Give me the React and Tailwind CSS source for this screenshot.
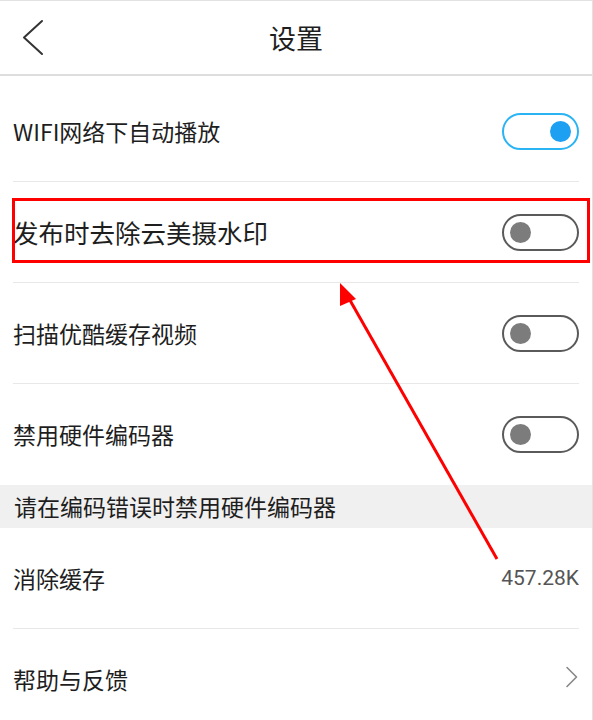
const font = { fontFamily: '"Noto Sans CJK SC", "Noto Sans", sans-serif' };

function Toggle({ on }) {
  return (
    <div
      className={`flex h-[37px] w-[77px] items-center rounded-full border-2 px-[6px] ${
        on ? "justify-end border-[#2ab4f4]" : "justify-start border-[#5a5a5a]"
      }`}
    >
      <div className={`h-[21px] w-[21px] rounded-full ${on ? "bg-[#1ea0f2]" : "bg-[#7c7c7c]"}`} />
    </div>
  );
}

function Row({ label, children, divider = true, big = false }) {
  return (
    <div
      className={`mx-[13px] flex h-[101px] shrink-0 items-center justify-between border-b ${
        divider ? "border-[#e8e8e8]" : "border-transparent"
      }`}
    >
      <span className={`${big ? "text-[25.5px]" : "text-[23px]"} leading-none text-[#1e1e1e]`}>{label}</span>
      {children}
    </div>
  );
}

export default function App() {
  return (
    <div className="relative h-[720px] w-[593px] overflow-hidden border-t border-r border-[#e2e2e2] bg-white" style={font}>
      {/* Header */}
      <div className="relative flex h-[75px] items-center justify-center border-b-2 border-[#dedede]">
        <svg className="absolute left-[20px] top-[17px]" width="26" height="40" viewBox="0 0 26 40">
          <polyline points="22,3 4,19.5 22,36" fill="none" stroke="#333" strokeWidth="2" strokeLinecap="round" strokeLinejoin="round" />
        </svg>
        <span className="text-[27px] leading-none text-[#1e1e1e]">设置</span>
      </div>

      <div className="flex flex-col pt-[5px]">
        <Row label="WIFI网络下自动播放">
          <Toggle on />
        </Row>

        <div className="relative">
          <Row label="发布时去除云美摄水印" big>
            <Toggle />
          </Row>
          <div className="pointer-events-none absolute left-[12px] right-[2px] top-[16px] h-[65px] border-[3px] border-[#ff0000]" />
        </div>

        <Row label="扫描优酷缓存视频">
          <Toggle />
        </Row>

        <Row label="禁用硬件编码器" divider={false}>
          <Toggle />
        </Row>

        {/* Section hint */}
        <div className="flex h-[43px] items-center bg-[#f0f0f0] px-[14px]">
          <span className="text-[23px] leading-none text-[#1e1e1e]">请在编码错误时禁用硬件编码器</span>
        </div>

        <Row label="消除缓存">
          <span className="text-[21px] leading-none text-[#555]" style={{ fontFamily: '"Roboto", "Noto Sans", sans-serif' }}>
            457.28K
          </span>
        </Row>

        <Row label="帮助与反馈" divider={false}>
          <svg className="mb-[4px]" width="14" height="24" viewBox="0 0 14 24">
            <polyline points="2,2.5 11.5,12 2,21.5" fill="none" stroke="#888" strokeWidth="1.6" strokeLinecap="round" strokeLinejoin="round" />
          </svg>
        </Row>
      </div>

      {/* Annotation arrow */}
      <svg className="pointer-events-none absolute left-0 top-0" width="593" height="720" viewBox="0 0 593 720">
        <line x1="497" y1="558" x2="347" y2="294" stroke="#ff0000" strokeWidth="3" />
        <polygon points="340,282 356,298 340,305" fill="#ff0000" />
      </svg>
    </div>
  );
}
